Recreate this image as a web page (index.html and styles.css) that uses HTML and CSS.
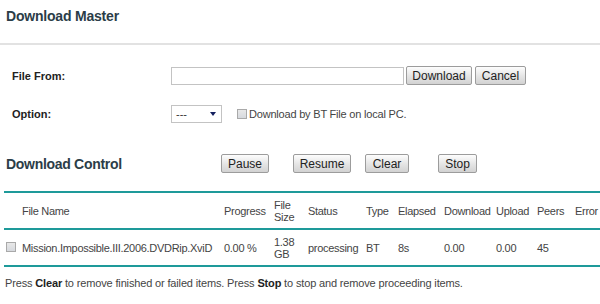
FILE: index.html
```html
<!DOCTYPE html>
<html lang="en">
<head>
    <meta charset="UTF-8">
    <title>Download Master</title>
    <link rel="stylesheet" href="styles.css">
</head>
<body>
    <h1 class="title">Download Master</h1>

    <div class="form">
        <div class="form-row">
            <label class="form-label">File From:</label>
            <input class="file-input" type="text">
            <button class="btn btn-download">Download</button>
            <button class="btn btn-cancel">Cancel</button>
        </div>
        <div class="form-row row-option">
            <label class="form-label">Option:</label>
            <div class="select"><span>---</span><span class="arrow"></span></div>
            <span class="check check-option"></span>
            <span class="option-text">Download by BT File on local PC.</span>
        </div>
    </div>

    <div class="control">
        <h2 class="control-title">Download Control</h2>
        <button class="btn btn-pause">Pause</button>
        <button class="btn btn-resume">Resume</button>
        <button class="btn btn-clear">Clear</button>
        <button class="btn btn-stop">Stop</button>
    </div>

    <table class="list">
        <colgroup>
            <col class="c-check">
            <col class="c-name">
            <col class="c-progress">
            <col class="c-size">
            <col class="c-status">
            <col class="c-type">
            <col class="c-elapsed">
            <col class="c-down">
            <col class="c-up">
            <col class="c-peers">
            <col class="c-error">
        </colgroup>
        <thead>
            <tr>
                <th></th>
                <th>File Name</th>
                <th>Progress</th>
                <th>File<br>Size</th>
                <th>Status</th>
                <th>Type</th>
                <th>Elapsed</th>
                <th>Download</th>
                <th>Upload</th>
                <th>Peers</th>
                <th>Error</th>
            </tr>
        </thead>
        <tbody>
            <tr>
                <td><span class="check"></span></td>
                <td>Mission.Impossible.III.2006.DVDRip.XviD</td>
                <td>0.00 %</td>
                <td>1.38<br>GB</td>
                <td>processing</td>
                <td>BT</td>
                <td>8s</td>
                <td>0.00</td>
                <td>0.00</td>
                <td>45</td>
                <td></td>
            </tr>
        </tbody>
    </table>

    <p class="note">Press <b>Clear</b> to remove finished or failed items. Press <b>Stop</b> to stop and remove proceeding items.</p>
</body>
</html>
```

FILE: styles.css
```css
body {
    margin: 0;
    font-family: "Liberation Sans", Arial, sans-serif;
    font-size: 12px;
    color: #333;
    overflow: hidden;
}
.title {
    margin: 0;
    height: 45px;
    padding: 8px 0 0 6px;
    box-sizing: border-box;
    font-size: 14px;
    letter-spacing: -0.2px;
    color: #2b3d48;
    border-bottom: 2px solid #e2e2e2;
}
.form {
    padding-top: 21px;
}
.form-row {
    display: flex;
    align-items: center;
    height: 19px;
}
.row-option {
    margin-top: 19px;
}
.form-label {
    width: 159px;
    padding-left: 12px;
    font-size: 11px;
    font-weight: bold;
    color: #222;
}
.file-input {
    width: 233px;
    height: 18px;
    box-sizing: border-box;
    border: 1px solid #c3c3c3;
    margin: 0;
}
.btn {
    height: 19px;
    padding: 0;
    box-sizing: border-box;
    border: 1px solid #9c9c9c;
    border-radius: 2px;
    background: linear-gradient(#fdfdfd, #e4e4e4 55%, #d2d2d2);
    font-family: "Liberation Sans", Arial, sans-serif;
    font-size: 12px;
    color: #222;
}
.btn-download {
    width: 66px;
    margin-left: 2px;
}
.btn-cancel {
    width: 51px;
    margin-left: 3px;
}
.select {
    width: 51px;
    height: 18px;
    box-sizing: border-box;
    border: 1px solid #c3c3c3;
    display: flex;
    align-items: center;
    justify-content: space-between;
    padding: 0 5px 0 4px;
    font-size: 11px;
}
.arrow {
    width: 0;
    height: 0;
    border-left: 3px solid transparent;
    border-right: 3px solid transparent;
    border-top: 4px solid #13205e;
}
.check {
    display: inline-block;
    width: 10px;
    height: 10px;
    box-sizing: border-box;
    border: 1px solid #a9a9a9;
    background: linear-gradient(#e8e8e8, #d6d9de);
}
.check-option {
    margin-left: 15px;
}
.option-text {
    margin-left: 2px;
    font-size: 11px;
    letter-spacing: -0.2px;
    color: #444;
}
.control {
    display: flex;
    align-items: center;
    height: 19px;
    margin-top: 31px;
}
.control-title {
    margin: 0;
    width: 215px;
    padding-left: 6px;
    font-size: 14px;
    letter-spacing: -0.3px;
    color: #2b3d48;
}
.btn-pause {
    width: 48px;
}
.btn-resume {
    width: 58px;
    margin-left: 24px;
}
.btn-clear {
    width: 44px;
    margin-left: 14px;
}
.btn-stop {
    width: 39px;
    margin-left: 29px;
}
.list {
    margin: 18px 0 0 4px;
    width: 620px;
    table-layout: fixed;
    border-collapse: collapse;
    font-size: 11px;
    letter-spacing: -0.3px;
    color: #444;
}
.list thead tr {
    border-top: 2px solid #1e9a9a;
    border-bottom: 2px solid #1e9a9a;
}
.list tbody tr {
    border-bottom: 2px solid #1e9a9a;
}
.list th {
    font-weight: normal;
    text-align: left;
    height: 35px;
    padding: 0 0 0 2px;
    line-height: 12px;
}
.list td {
    height: 35px;
    padding: 0 0 0 2px;
    line-height: 12px;
}
.c-check { width: 16px; }
.c-name { width: 202px; }
.c-progress { width: 50px; }
.c-size { width: 34px; }
.c-status { width: 58px; }
.c-type { width: 32px; }
.c-elapsed { width: 46px; }
.c-down { width: 52px; }
.c-up { width: 41px; }
.c-peers { width: 38px; }
.c-error { width: 51px; }
.note {
    margin: 10px 0 0 5px;
    font-size: 11px;
    letter-spacing: -0.15px;
    color: #444;
}
.note b {
    color: #222;
}
```
